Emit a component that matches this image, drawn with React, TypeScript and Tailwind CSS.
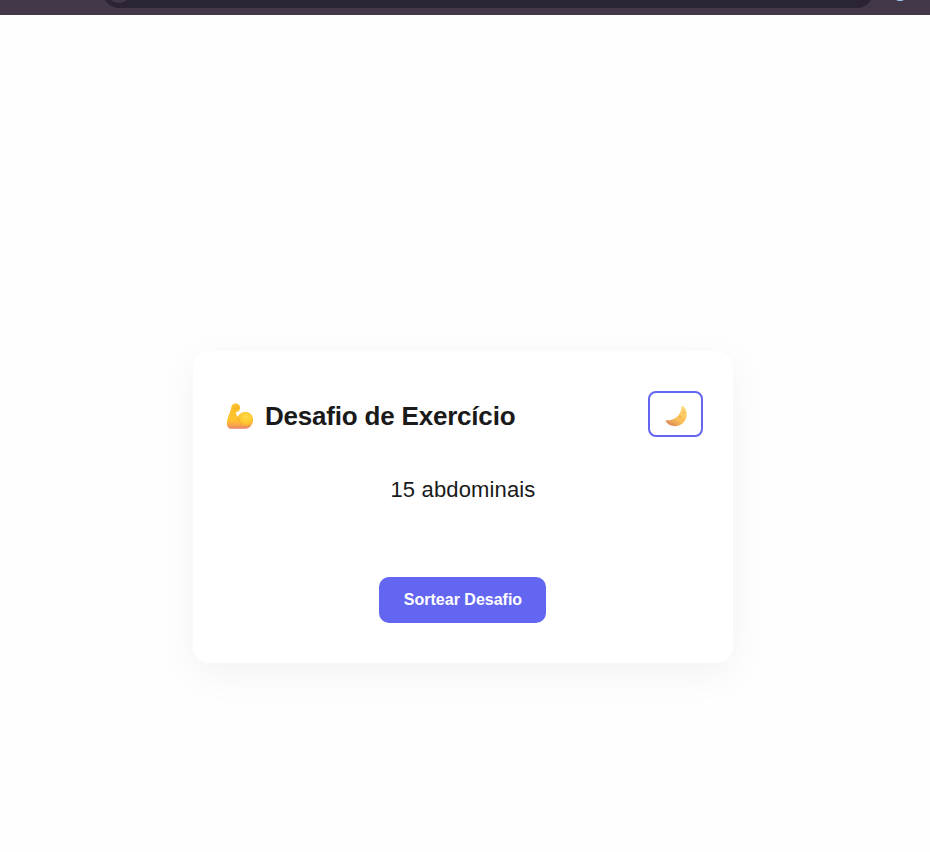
function Arm() {
  return (
    <svg viewBox="0 0 28 26" className="h-[26px] w-7 shrink-0" aria-hidden="true">
      <defs>
        <linearGradient id="arm" x1="0" y1="0" x2="0" y2="1">
          <stop offset="0" stopColor="#fcc02a" />
          <stop offset="0.65" stopColor="#ffc42d" />
          <stop offset="0.85" stopColor="#faa548" />
          <stop offset="1" stopColor="#e5806a" />
        </linearGradient>
        <radialGradient id="bicep" cx="0.55" cy="0.32" r="0.72">
          <stop offset="0" stopColor="#ffdc48" />
          <stop offset="0.6" stopColor="#ffc932" />
          <stop offset="1" stopColor="#f9a63c" />
        </radialGradient>
      </defs>
      <path d="M5.300 4.200C5.700 1.800 7.200.6 9.400.6c2.800 0 4.800 1.700 4.800 4.100 0 2.500-1.700 4.200-4.200 4.200 0 2.100.5 3.600 1.700 4.900 1.500-3 4.200-4.700 7.700-4.700 4.500 0 7.600 3.300 7.600 7.500 0 5.200-3.300 9.200-7.600 9.200H6C2.700 25.800.9 23.600.9 20.400.9 14.800 4 10.500 5.300 4.200Z" fill="url(#arm)" />
      <ellipse cx="19.500" cy="16.200" rx="7.300" ry="6.900" fill="url(#bicep)" />
      <path d="M7.800 5.200c1.200.8 2.600.8 3.800.1M10 3.400c1-.5 2.200 0 2.200 1" fill="none" stroke="#e9a01c" strokeWidth=".7" strokeLinecap="round" />
      <path d="M11.800 14.200c.2 2.300 1.300 4.200 3 5.600" fill="none" stroke="#f2a12c" strokeWidth=".7" strokeLinecap="round" />
    </svg>
  );
}

function Moon() {
  return (
    <svg viewBox="0 0 22 22" className="h-[22px] w-[22px]" aria-hidden="true">
      <defs>
        <linearGradient id="moon" x1="1" y1="0" x2="0.3" y2="1">
          <stop offset="0" stopColor="#ffdc78" />
          <stop offset="0.65" stopColor="#fbc05b" />
          <stop offset="1" stopColor="#dd8b58" />
        </linearGradient>
      </defs>
      <path d="M17.700.9C20.500 3 22 6.100 21.800 9.700c-.4 6.400-5.400 11.500-12 11.500-3.700 0-7-1.700-8.900-4.600-.5-.8-.2-1.300.7-1.300 4.400.1 8.100-1.300 11.200-4.400 2.500-2.500 3.800-5.800 3.900-9.300 0-.9.400-1.200 1-.7Z" fill="url(#moon)" />
      <g fill="#eda647">
        <circle cx="18.800" cy="7.500" r=".8" />
        <circle cx="15" cy="12.300" r="1" />
        <circle cx="17.500" cy="14.700" r=".7" />
        <circle cx="10" cy="18.700" r=".9" />
        <circle cx="5.500" cy="17.600" r=".6" />
      </g>
    </svg>
  );
}

export default function App() {
  return (
    <div className="flex h-[852px] w-[930px] flex-col overflow-hidden bg-[#fefefe] font-['Liberation_Sans',Arial,sans-serif] text-[#1a1a1a]">
      <header className="flex h-[15px] shrink-0 items-start overflow-hidden bg-[#43384a] pl-[103px]">
        <div className="-mt-6 flex h-8 w-[770px] shrink-0 items-center rounded-full bg-[#2b2435] pl-1">
          <div className="-mt-0.5 h-6 w-6 rounded-full bg-[#43384a]" />
        </div>
        <div className="-mt-[15px] ml-[19px] h-4 w-4 shrink-0 rounded-full bg-[#a8d2ff]" />
      </header>
      <main className="flex grow justify-center pt-[336px] pr-1">
        <section className="flex h-[312px] w-[540px] flex-col items-center rounded-2xl bg-white px-[30px] py-10 shadow-[0_10px_40px_rgba(0,0,0,0.05)]">
          <div className="flex h-[46px] w-full items-center justify-between">
            <h1 className="flex items-center gap-[11px] pt-1 pl-[3px] text-[26px] leading-[30px] font-bold tracking-[-0.2px] whitespace-nowrap">
              <Arm />
              Desafio de Exercício
            </h1>
            <button aria-label="Alternar tema" className="flex h-[46px] w-[55px] items-center justify-center rounded-lg border-2 border-[#6366f1] pt-1">
              <Moon />
            </button>
          </div>
          <p className="mt-10 text-[22px] leading-[25px] tracking-[0.15px]">15 abdominais</p>
          <button className="mt-auto mr-px h-[46px] w-[167px] rounded-[10px] bg-[#6366f1] pl-px text-base font-bold text-white">Sortear Desafio</button>
        </section>
      </main>
    </div>
  );
}
